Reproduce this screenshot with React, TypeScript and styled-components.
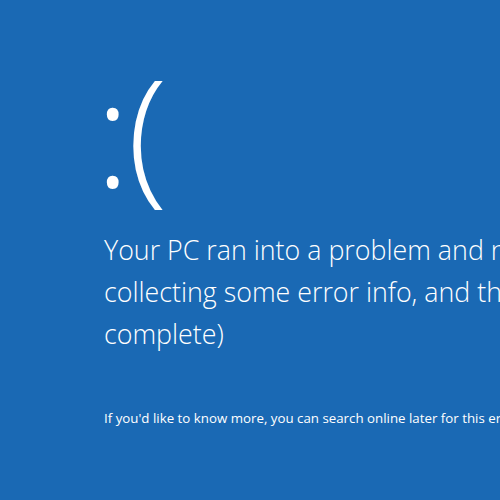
import React from "react";
import styled, { createGlobalStyle } from "styled-components";

const Global = createGlobalStyle`
  html, body { margin: 0; padding: 0; background: #1a69b4; }
  body { width: 500px; height: 500px; overflow: hidden; }
`;

const Screen = styled.main`
  width: 500px;
  height: 500px;
  box-sizing: border-box;
  padding: 50px 0 0 104px;
  background: #1a69b4;
  color: #ffffff;
  font-family: "Open Sans", "Noto Sans", sans-serif;
  overflow: hidden;
  white-space: nowrap;
`;

const Face = styled.div`
  margin-left: -9px;
  font-size: 148px;
  font-weight: 300;
  line-height: 160px;
  height: 179px;
  letter-spacing: -3px;
`;

const Message = styled.p`
  margin: 0;
  font-size: 26.8px;
  font-weight: 300;
  line-height: 42px;
`;

const Hint = styled.p`
  margin: 54px 0 0;
  font-size: 13.3px;
  font-weight: 400;
`;

export default function App() {
  return (
    <>
      <Global />
      <Screen>
        <Face>:(</Face>
        <Message>
          Your PC ran into a problem and needs to restart. We're just
          <br />
          collecting some error info, and then we'll restart for you. (0%
          <br />
          complete)
        </Message>
        <Hint>
          If you'd like to know more, you can search online later for this error: HAL_INITIALIZATION_FAILED
        </Hint>
      </Screen>
    </>
  );
}
